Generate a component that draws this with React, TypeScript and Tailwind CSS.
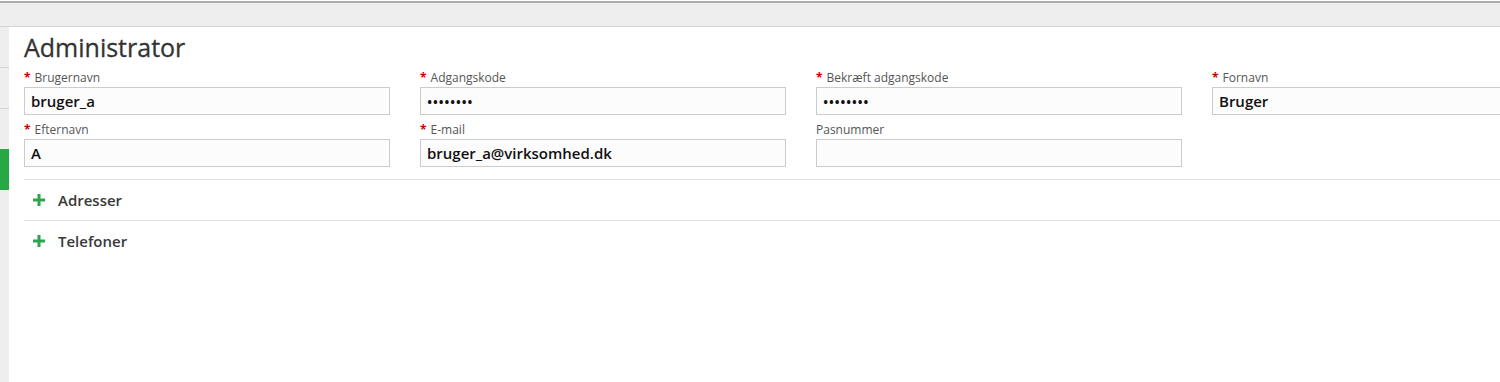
import React from "react";

const font = { fontFamily: '"Open Sans", "Noto Sans", sans-serif' };

function Field({ label, value, required, password }: { label: string; value: string; required?: boolean; password?: boolean }) {
  return (
    <div className="w-[366px] shrink-0">
      <div className="h-[18px] text-[12px] leading-[18px] text-[#555]">
        {required && <span className="text-[#c00] font-bold mr-[4px]">*</span>}
        {label}
      </div>
      <div className="h-[28px] border border-[#cccccc] bg-[#fcfcfc] px-[6px] flex items-center">
        <span className={password ? "text-[14px] tracking-[0.5px] text-[#111] font-semibold" : "text-[15px] font-semibold text-[#111]"}>
          {value}
        </span>
      </div>
    </div>
  );
}

function Section({ title }: { title: string }) {
  return (
    <div className="h-[41px] border-t border-[#e2e2e2] flex items-center">
      <svg width="12" height="12" viewBox="0 0 12 12" className="ml-[9px] mr-[13px]">
        <rect x="4.5" y="0" width="3" height="12" fill="#2ea44f" />
        <rect x="0" y="4.5" width="12" height="3" fill="#2ea44f" />
      </svg>
      <span className="text-[15px] font-semibold text-[#3a3a3a]">{title}</span>
    </div>
  );
}

export default function App() {
  return (
    <div className="w-[1500px] h-[382px] overflow-hidden bg-white" style={font}>
      <div className="h-[1px] bg-white" />
      <div className="h-[2px] bg-[#adadad]" />
      <div className="h-[24px] bg-[#eeeeee] border-b border-[#d4d4d4]" />
      <div className="flex h-[355px]">
        <div className="w-[9px] shrink-0 bg-[#eeeeee] flex flex-col">
          <div className="h-[41px] border-b border-[#d4d4d4]" />
          <div className="h-[41px] border-b border-[#d4d4d4]" />
          <div className="h-[40px]" />
          <div className="h-[41px] bg-[#28a745]" />
        </div>
        <div className="flex-1 pl-[15px] overflow-hidden">
          <div className="text-[25px] leading-[36px] text-[#333] mt-[2px] [-webkit-text-stroke:0.3px_#333]">Administrator</div>
          <div className="flex gap-[30px] mt-[4px]">
            <Field label="Brugernavn" value="bruger_a" required />
            <Field label="Adgangskode" value="••••••••" required password />
            <Field label="Bekræft adgangskode" value="••••••••" required password />
            <Field label="Fornavn" value="Bruger" required />
          </div>
          <div className="flex gap-[30px] mt-[6px]">
            <Field label="Efternavn" value="A" required />
            <Field label="E-mail" value="bruger_a@virksomhed.dk" required />
            <Field label="Pasnummer" value="" />
          </div>
          <div className="mt-[12px]">
            <Section title="Adresser" />
            <Section title="Telefoner" />
          </div>
        </div>
      </div>
    </div>
  );
}
